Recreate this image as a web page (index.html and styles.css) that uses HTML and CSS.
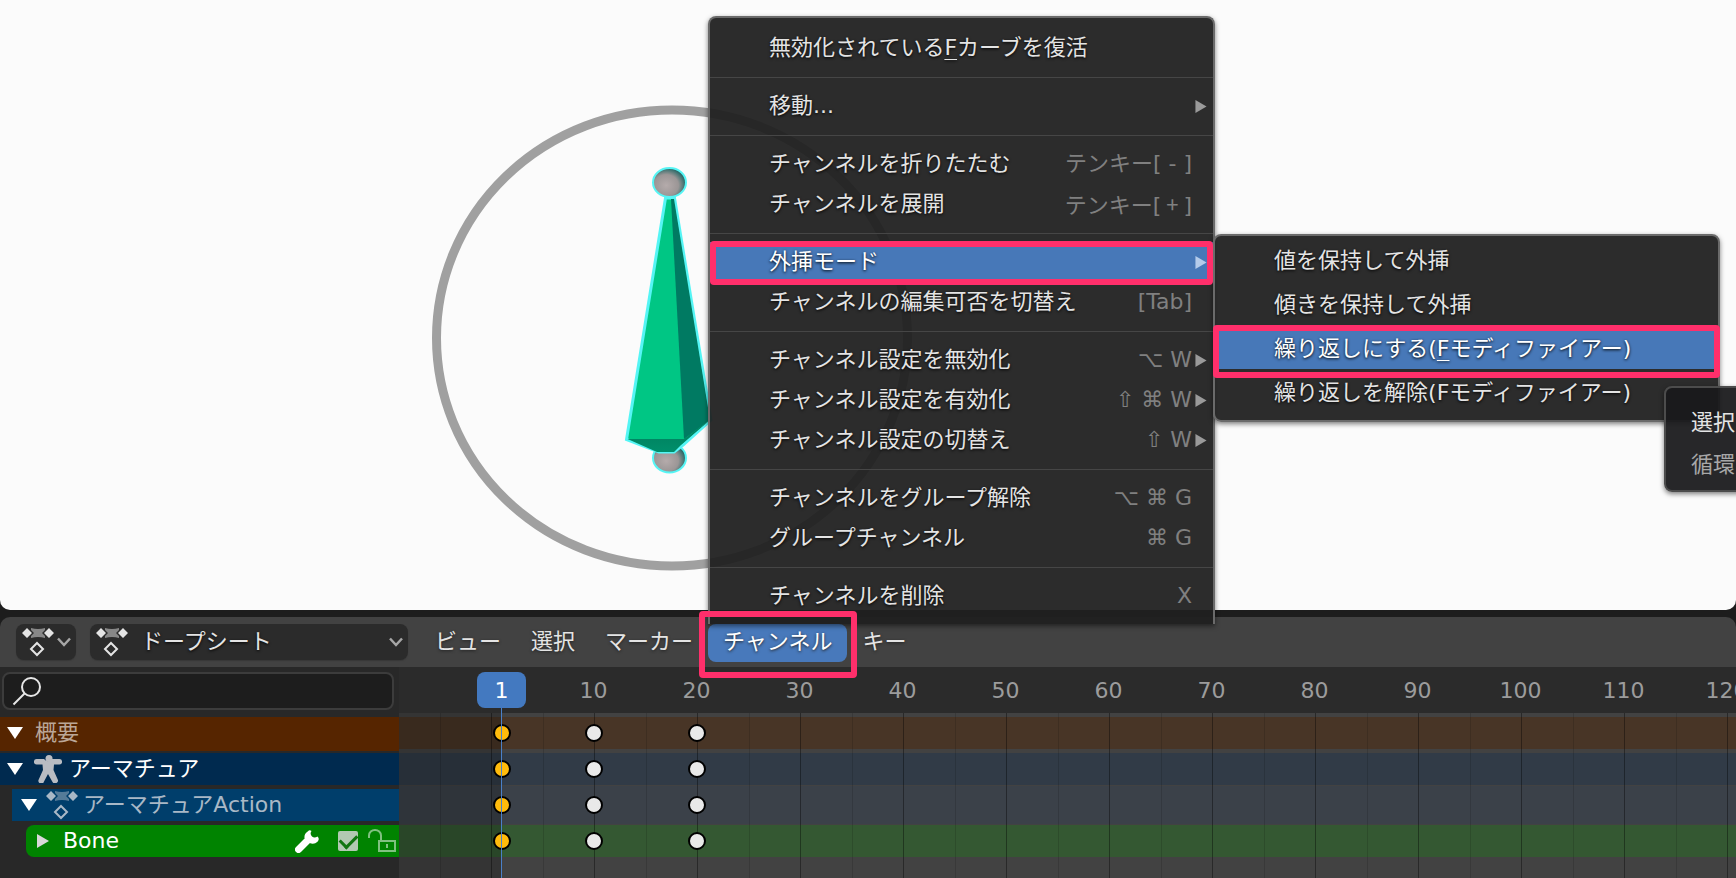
FILE: index.html
```html
<!DOCTYPE html>
<html lang="ja">
<head>
<meta charset="utf-8">
<title>ドープシート</title>
<link rel="stylesheet" href="styles.css">
</head>
<body>
<svg class="defs" aria-hidden="true">
  <symbol id="dope" viewBox="0 0 32 30">
    <path d="M9 1Q16 3 23 1V3L20 6L23 9V11Q16 9 9 11V9L12 6L9 3Z" fill="currentColor" opacity=".5"/>
    <path d="M5 1L10 6L5 11L0 6ZM27 1L32 6L27 11L22 6Z" fill="currentColor"/>
    <path d="M15 16L21 22L15 28L9 22Z" fill="none" stroke="currentColor" stroke-width="2"/>
  </symbol>
  <symbol id="chevron" viewBox="0 0 16 12"><path d="M2 2.500L8 9L14 2.500" fill="none" stroke="currentColor" stroke-width="2.500"/></symbol>
  <symbol id="down" viewBox="0 0 16 12"><path d="M0 0H16L8 12Z" fill="currentColor"/></symbol>
  <symbol id="right" viewBox="0 0 12 14"><path d="M0 0L12 7L0 14Z" fill="currentColor"/></symbol>
</svg>

<div class="app">
  <main class="viewport">
    <svg class="scene" width="920" height="600" viewBox="0 0 920 600" role="img" aria-label="ボーン">
      <defs>
        <radialGradient id="ball" cx=".4" cy=".6" r=".62">
          <stop offset="0" stop-color="#b5abab"/><stop offset=".6" stop-color="#9b9696"/><stop offset="1" stop-color="#1d6462"/>
        </radialGradient>
        <linearGradient id="under" x1="0" x2="0" y1="0" y2="1">
          <stop offset="0" stop-color="#007a58"/><stop offset="1" stop-color="#008f6b"/>
        </linearGradient>
      </defs>
      <ellipse cx="672" cy="338" rx="235.500" ry="228" fill="none" stroke="#a0a0a0" stroke-width="9"/>
      <g stroke="#55f5f5" stroke-width="2">
        <ellipse cx="669.500" cy="182.500" rx="16.500" ry="14.500" fill="url(#ball)"/>
        <ellipse cx="669.500" cy="458" rx="16.500" ry="14.500" fill="url(#ball)"/>
        <path d="M665.500 198H674.500L711 420L683 445L674 452H659L626.500 439.500Z" fill="#00c684" stroke-width="3"/>
      </g>
      <path d="M671 199H674L710 420L684 439Z" fill="#007a62"/>
      <path d="M627.500 439H684L710 420L681 445L674 452H657Z" fill="url(#under)"/>
    </svg>
  </main>

  <section class="editor">
    <header class="bar">
      <button class="type" aria-label="エディタータイプ">
        <svg class="i-dope"><use href="#dope"/></svg><svg class="i-chev"><use href="#chevron"/></svg>
      </button>
      <label class="mode">
        <svg class="i-dope"><use href="#dope"/></svg>
        <select aria-label="モード"><option>ドープシート</option></select>
        <svg class="i-chev"><use href="#chevron"/></svg>
      </label>
      <nav class="menus">
        <button class="tab">ビュー</button>
        <button class="tab">選択</button>
        <button class="tab">マーカー</button>
        <div class="holder">
          <button class="tab open">チャンネル</button>
          <ul class="menu main">
            <li><button><span>無効化されている<u>F</u>カーブを復活</span></button></li>
            <li class="sep"></li>
            <li><button><span>移動...</span></button><svg class="arrow"><use href="#right"/></svg></li>
            <li class="sep"></li>
            <li><button><span>チャンネルを折りたたむ</span><kbd>テンキー[ - ]</kbd></button></li>
            <li><button><span>チャンネルを展開</span><kbd>テンキー[<span class="plus"> + </span>]</kbd></button></li>
            <li class="sep"></li>
            <li class="active">
              <button><span>外挿モード</span></button><svg class="arrow"><use href="#right"/></svg>
              <i class="mark mark-item"></i>
              <ul class="menu sub">
                <li><button><span>値を保持して外挿</span></button></li>
                <li><button><span>傾きを保持して外挿</span></button></li>
                <li class="active">
                  <button><span>繰り返しにする(<u>F</u>モディファイアー)</span></button>
                  <i class="mark mark-sub"></i>
                </li>
                <li><button><span>繰り返しを解除(Fモディファイアー)</span></button></li>
                <li class="tip" role="tooltip"><p>選択</p><p class="dim">循環</p></li>
              </ul>
            </li>
            <li><button><span>チャンネルの編集可否を切替え</span><kbd>[Tab]</kbd></button></li>
            <li class="sep"></li>
            <li><button><span>チャンネル設定を無効化</span><kbd>⌥ W</kbd></button><svg class="arrow"><use href="#right"/></svg></li>
            <li><button><span>チャンネル設定を有効化</span><kbd>⇧ ⌘ W</kbd></button><svg class="arrow"><use href="#right"/></svg></li>
            <li><button><span>チャンネル設定の切替え</span><kbd>⇧ W</kbd></button><svg class="arrow"><use href="#right"/></svg></li>
            <li class="sep"></li>
            <li><button><span>チャンネルをグループ解除</span><kbd>⌥ ⌘ G</kbd></button></li>
            <li><button><span>グループチャンネル</span><kbd>⌘ G</kbd></button></li>
            <li class="sep"></li>
            <li><button><span>チャンネルを削除</span><kbd>X</kbd></button></li>
          </ul>
          <i class="mark mark-tab"></i>
        </div>
        <button class="tab">キー</button>
      </nav>
    </header>

    <div class="body">
      <aside class="channels">
        <label class="search">
          <svg width="30" height="30" viewBox="0 0 30 30" fill="none" stroke="#e6e6e6" stroke-width="2"><circle cx="19" cy="11" r="9"/><path d="M12.500 17.500L1.500 28.500"/></svg>
          <input type="text" aria-label="検索">
        </label>
        <div class="row summary"><button aria-label="閉じる"><svg class="i-down"><use href="#down"/></svg></button><span>概要</span></div>
        <div class="row object"><button aria-label="閉じる"><svg class="i-down"><use href="#down"/></svg></button>
          <svg class="man" width="28" height="28" viewBox="0 0 28 28" fill="#b9bcc2"><circle cx="15" cy="3.500" r="3.500"/><path d="M2.500 4H10Q14 8.500 18 4H25.500A2.500 2.700 0 0 1 25.500 9.500H20L19.500 15L23.500 24A2.600 2.600 0 0 1 18.500 27L14 19L10 26.500A2.600 2.600 0 0 1 4.500 25L9 15L8.500 9.500H2.500A2.500 2.700 0 0 1 2.500 4Z"/></svg>
          <span>アーマチュア</span></div>
        <div class="row action"><button aria-label="閉じる"><svg class="i-down"><use href="#down"/></svg></button><svg class="i-dope"><use href="#dope"/></svg><span>アーマチュアAction</span></div>
        <div class="row group"><button aria-label="開く"><svg class="i-right"><use href="#right"/></svg></button><span class="name">Bone</span>
          <button aria-label="モディファイアー"><svg width="24" height="24" viewBox="0 0 24 24"><path d="M3.500 20.500L12.500 11.500" stroke="#fff" stroke-width="7" stroke-linecap="round"/><path d="M13 2.200Q14.500 .5 16.500 2Q14.500 5 17 7.500Q19.500 9.500 22.500 7.500Q25 10 22.500 12.800Q19 16 14.500 14L9.500 9Q9 4.500 13 2.200Z" fill="#fff"/></svg></button>
          <input class="check" type="checkbox" checked aria-label="有効">
          <button class="lock" aria-label="ロック"><svg width="28" height="24" viewBox="0 0 28 24" fill="none" stroke="#80c180" stroke-width="2"><path d="M1 9V6.500A6 5.500 0 0 1 13 6.500V12"/><path d="M11 12H27V22H11ZM19 15V19"/></svg></button>
        </div>
      </aside>
      <div class="timeline">
        <div class="ruler"><span>10</span><span>20</span><span>30</span><span>40</span><span>50</span><span>60</span><span>70</span><span>80</span><span>90</span><span>100</span><span>110</span><span>120</span></div>
        <div class="lanes">
          <div class="lane summary"><i class="key on"></i><i class="key k10"></i><i class="key k20"></i></div>
          <div class="lane object"><i class="key on"></i><i class="key k10"></i><i class="key k20"></i></div>
          <div class="lane action"><i class="key on"></i><i class="key k10"></i><i class="key k20"></i></div>
          <div class="lane group"><i class="key on"></i><i class="key k10"></i><i class="key k20"></i></div>
        </div>
        <div class="playhead"><span>1</span></div>
      </div>
    </div>
  </section>
</div>
</body>
</html>
```
FILE: styles.css
```css
* { box-sizing: border-box; }
body {
  margin: 0;
  background: #1d1d1d;
  color: #e4e4e4;
  font: 22px/32px "DejaVu Sans", "Noto Sans CJK JP", sans-serif;
  overflow: hidden;
}
button, select, input, kbd { font: inherit; color: inherit; }
button { border: 0; padding: 0; background: none; text-align: left; white-space: nowrap; }
ul, p { margin: 0; padding: 0; list-style: none; }
svg { display: block; flex: none; }
u { text-decoration-thickness: 1px; text-underline-offset: 4px; }
.defs { position: absolute; width: 0; height: 0; }
.i-dope { width: 32px; height: 30px; }
.i-chev { width: 16px; height: 12px; color: #a6a6a6; }
.i-down { width: 16px; height: 12px; }
.i-right { width: 12px; height: 16px; }

.app { display: grid; grid-template-rows: 1fr auto; gap: 7px; min-height: 100vh; overflow: hidden; }
.viewport { position: relative; background: #fbfbfb; border-radius: 0 0 10px 10px; }
.scene { position: absolute; left: 0; top: 0; }

.bar {
  display: flex;
  align-items: center;
  height: 50px;
  padding: 0 16px;
  background: #424242;
  border-radius: 10px 10px 0 0;
}
.type, .mode {
  display: flex;
  align-items: center;
  height: 36px;
  background: #2b2b2b;
  border-radius: 8px;
  box-shadow: 0 1px 1px #383838;
}
.type { width: 60px; padding: 0 4px 0 6px; gap: 2px; }
.mode { width: 318px; margin-left: 14px; padding: 0 4px 0 6px; }
.mode select {
  appearance: none;
  flex: 1;
  min-width: 0;
  margin-left: 13px;
  padding: 0;
  border: 0;
  background: none;
  text-shadow: 0 1px 3px #000;
}
.menus { display: flex; margin: 2px 0 0 12px; }
.holder { position: relative; }
.tab { height: 38px; padding: 0 15px 2px; border-radius: 8px; text-shadow: 0 1px 3px #222; }
.tab.open { background: #4879bb; color: #fff; }

.menu {
  position: absolute;
  z-index: 2;
  width: 507px;
  background: rgba(32, 32, 32, .945);
  border: 2px solid #6a6a6a;
  box-shadow: 0 2px 5px rgba(0, 0, 0, .5);
}
.menu li { position: relative; }
.menu button {
  display: flex;
  align-items: center;
  justify-content: space-between;
  width: 100%;
  height: 40px;
  padding: 0 21px 0 59px;
  text-shadow: 0 1px 3px #000;
}
.menu kbd { color: #808080; white-space: pre; text-shadow: none; }
.plus { font-family: "Noto Sans CJK JP", sans-serif; }
.menu .active > button { background: #4778b8; color: #fff; }
.menu .sep { height: 18px; padding-top: 9px; }
.menu .sep::before { content: ""; display: block; height: 1px; background: #464646; }
.main { left: 0; bottom: 100%; padding: 10px 0 8px; border-bottom: 0; border-radius: 8px 8px 0 0; }
.sub { left: 100%; top: -8px; padding: 5px 0 7px; border-radius: 8px; }
.main > .active > .sub { display: grid; gap: 4px; }
.arrow { position: absolute; right: 6px; top: 14px; width: 12px; height: 13px; color: #9a9a9a; }
.active > .arrow { color: #b4cbea; }
.mark { position: absolute; z-index: 3; border: 6px solid #ff2f6b; border-radius: 4px; pointer-events: none; }
.mark-item { inset: -1px 0 -3px; }
.mark-sub { inset: -4px -2px -9px; }
.mark-tab { inset: -13px -10px -16px -9px; }
.menu .tip {
  position: absolute;
  z-index: 4;
  left: 449px;
  top: 150px;
  width: 240px;
  padding: 19px 25px 9px;
  background: rgba(25, 26, 28, .94);
  border: 2px solid #4c4c4c;
  border-radius: 8px;
  box-shadow: 0 2px 5px rgba(0, 0, 0, .5);
}
.tip p + p { margin-top: 10px; }
.tip .dim { color: #a8a8a8; }

.body { display: grid; grid-template-columns: 399px 1fr; background: #282828; }
.channels { padding-bottom: 21px; }
.search {
  display: flex;
  align-items: center;
  height: 38px;
  margin: 5px 5px 7px 2px;
  padding: 0 8px;
  border: 2px solid #3c3c3c;
  border-radius: 8px;
  background: #1d1d1d;
}
.search input { flex: 1; min-width: 0; border: 0; background: none; outline: none; }
.row { display: flex; align-items: center; height: 32px; margin-bottom: 4px; padding-left: 7px; }
.row:last-child { margin-bottom: 0; }
.row button { color: #fff; }
.row.summary { background: #562500; color: #bba798; box-shadow: 0 2px #562500; }
.row.summary span { margin-left: 12px; }
.row.object { background: #002a4f; color: #fff; }
.row.object .man { margin: 0 7px 0 11px; }
.row.action { margin-left: 12px; padding-left: 9px; background: #003e6b; color: #a9b8c6; }
.row.action .i-dope { margin: 0 5px 0 9px; }
.row.group { margin-left: 26px; padding: 0 3px 0 11px; background: #008300; color: #fff; border-radius: 8px 0 0 8px; }
.row.group > button:first-child { color: #d8d8d8; }
.name { flex: 1; margin-left: 14px; }
.check {
  appearance: none;
  width: 20px;
  height: 20px;
  margin: 0 10px 0 19px;
  border-radius: 2px;
  background: #b2c9b2;
  display: grid;
  place-items: center;
}
.check:checked::before {
  content: "";
  width: 14px;
  height: 8px;
  margin-bottom: 4px;
  border: solid #107510;
  border-width: 0 0 3px 3px;
  transform: rotate(-45deg);
}

.timeline { position: relative; display: flex; flex-direction: column; min-width: 0; overflow: hidden; background: #424242; }
.ruler { display: flex; align-items: center; height: 46px; padding: 2px 0 0 143px; background: #2b2b2b; color: #9c9c9c; }
.ruler span { flex: none; width: 103px; text-align: center; }
.lanes { position: relative; flex: 1; padding-top: 4px; }
.lanes::before, .lanes::after { content: ""; position: absolute; inset: 0; pointer-events: none; }
.lanes::before {
  background:
    repeating-linear-gradient(90deg, rgba(0, 0, 0, .38) 0 1px, transparent 1px 103px) 92px 0 / 103px 100%,
    repeating-linear-gradient(90deg, rgba(0, 0, 0, .14) 0 1px, transparent 1px 103px) 41px 0 / 103px 100%;
}
.lanes::after { width: 103px; background: rgba(0, 0, 0, .2); }
.lane { display: grid; align-items: center; height: 32px; margin-bottom: 4px; }
.lane.summary { background: #483526; }
.lane.object { background: #313b47; }
.lane.action { background: #3b4149; box-shadow: 0 3px #3b4149, 0 -3px #3b4149; }
.lane.group { background: #345832; }
.key {
  grid-area: 1 / 1;
  width: 18px;
  height: 18px;
  margin-left: 94px;
  border: 2px solid #000;
  border-radius: 50%;
  background: #e9e9e9;
  position: relative;
  z-index: 1;
}
.key.on { background: #ffbb0c; }
.key.k10 { margin-left: 186px; }
.key.k20 { margin-left: 289px; }
.playhead { position: absolute; z-index: 1; left: 78px; top: 5px; bottom: 0; width: 49px; }
.playhead::before { content: ""; position: absolute; left: 24px; top: 0; bottom: 0; width: 1px; background: #4a80c8; }
.playhead span { position: relative; display: block; height: 36px; line-height: 37px; border-radius: 8px; background: #4379c0; color: #fff; text-align: center; }
```
